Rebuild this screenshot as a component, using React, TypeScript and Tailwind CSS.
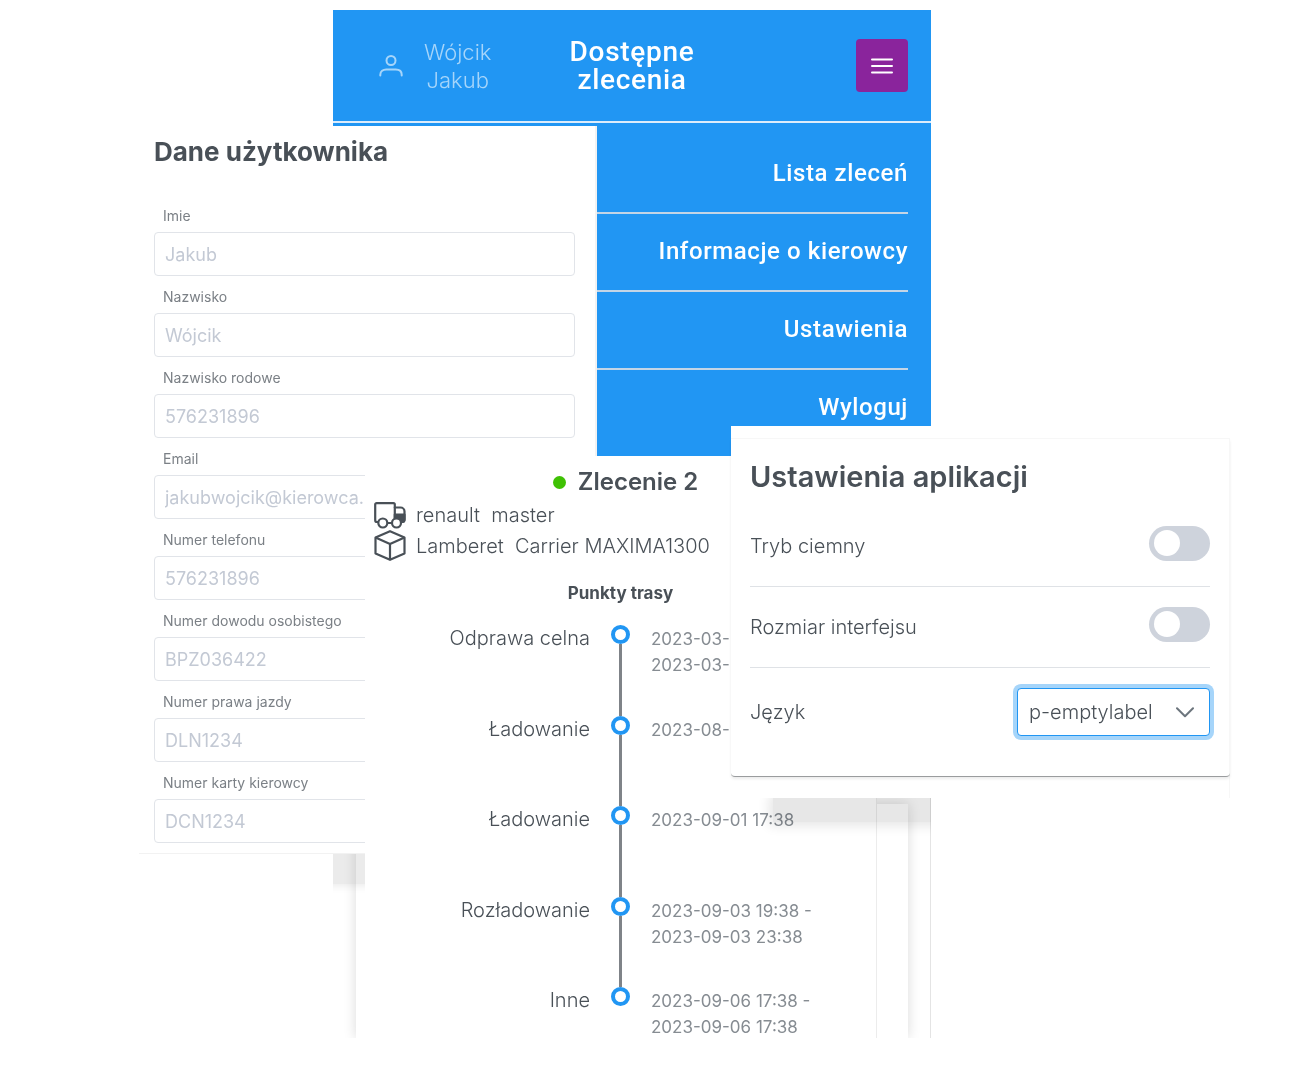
import React from 'react';

const menuItems = ['Lista zleceń', 'Informacje o kierowcy', 'Ustawienia', 'Wyloguj'];

const fields = [
  { id: 'imie', label: 'Imie', value: 'Jakub' },
  { id: 'nazwisko', label: 'Nazwisko', value: 'Wójcik' },
  { id: 'rodowe', label: 'Nazwisko rodowe', value: '576231896' },
  { id: 'email', label: 'Email', value: 'jakubwojcik@kierowca.pl' },
  { id: 'telefon', label: 'Numer telefonu', value: '576231896' },
  { id: 'dowod', label: 'Numer dowodu osobistego', value: 'BPZ036422' },
  { id: 'prawo', label: 'Numer prawa jazdy', value: 'DLN1234' },
  { id: 'karta', label: 'Numer karty kierowcy', value: 'DCN1234' },
];

const stops = [
  { name: 'Odprawa celna', dates: ['2023-03-', '2023-03-'] },
  { name: 'Ładowanie', dates: ['2023-08-'] },
  { name: 'Ładowanie', dates: ['2023-09-01 17:38'] },
  { name: 'Rozładowanie', dates: ['2023-09-03 19:38 -', '2023-09-03 23:38'] },
  { name: 'Inne', dates: ['2023-09-06 17:38 -', '2023-09-06 17:38'] },
];

function UserIcon() {
  return (
    <svg width="24" height="22" viewBox="0 0 24 22" fill="none" stroke="currentColor" strokeWidth="2" strokeLinecap="round" aria-hidden="true">
      <circle cx="12" cy="5.500" r="4.500" />
      <path d="M1.300 20.500v-.7c0-3.600 2.800-5.300 6-5.300h9.400c3.200 0 6 1.700 6 5.300v.7" />
    </svg>
  );
}

function TruckIcon() {
  return (
    <svg width="32" height="27" viewBox="0 0 32 27" fill="none" stroke="currentColor" strokeWidth="2.200" strokeLinejoin="round" strokeLinecap="round" aria-hidden="true">
      <path d="M5 20H3a1.800 1.800 0 0 1-1.800-1.800V2.600a1.400 1.400 0 0 1 1.400-1.400H19.400a1.400 1.400 0 0 1 1.400 1.400V17" />
      <path d="M20.800 5.500h5.700a4 4 0 0 1 4 4v8a2.500 2.500 0 0 1-2.500 2.500" />
      <path d="M20.800 12.500h9.700v5a2.500 2.500 0 0 1-2.500 2.500L23 17h-2.200z" fill="currentColor" />
      <path d="M13 21h5" />
      <circle cx="8.800" cy="21" r="4.500" fill="white" />
      <circle cx="22.500" cy="21" r="4.500" fill="white" />
    </svg>
  );
}

function BoxIcon() {
  return (
    <svg width="32" height="31" viewBox="0 0 32 31" fill="none" stroke="currentColor" strokeWidth="2.200" strokeLinejoin="round" aria-hidden="true">
      <path d="M16 1.200 30.500 7.500V23.500L16 29.800 1.500 23.500V7.500z" />
      <path d="M1.500 7.500 16 14 30.500 7.500M16 14v15.800" />
    </svg>
  );
}

/* The phone panel is the lowest layer and ends level with the order card. */
function PhonePanel() {
  return (
    <section className="col-start-2 col-end-7 row-start-1 mt-[10px] flex h-[1028px] flex-col overflow-hidden bg-white">
      <div className="bg-[#2196f3] text-white">
        <header className="grid h-[113px] grid-cols-3 items-center border-b-2 border-[#dcecfb] px-[23px]">
          <div className="flex items-center gap-[21px] pl-[23px] text-[#a6d5fa]">
            <UserIcon />
            <p className="text-center text-[22px] leading-7 font-light">
              Wójcik
              <br />
              Jakub
            </p>
          </div>
          <h1 className="text-center font-[Roboto,sans-serif] text-[28px] leading-7 font-medium tracking-wide">
            Dostępne zlecenia
          </h1>
          <button type="button" aria-label="Menu" className="flex h-[53px] w-[52px] items-center justify-center justify-self-end rounded bg-[#8a249c]">
            <svg width="24" height="18" viewBox="0 0 24 18" stroke="white" strokeWidth="2" strokeLinecap="round" aria-hidden="true">
              <path d="M2 2.500h20M2 9h20M2 15.500h20" />
            </svg>
          </button>
        </header>
        <nav className="mr-[23px] flex flex-col pt-[13px] pb-[19px]">
          {menuItems.map((item) => (
            <a key={item} href="#" className="h-[78px] border-b-2 border-[#c3d5e6] pt-[21px] text-right font-[Roboto,sans-serif] text-[24px] leading-8 font-medium tracking-wide last:border-0">
              {item}
            </a>
          ))}
        </nav>
      </div>
      <div className="flex flex-1 flex-col border-r border-[#e4e4e4] px-[23px] pt-[337px]">
        <div className="-mr-px flex-1 bg-white shadow-[0_0_12px_rgba(0,0,0,0.15)]" />
      </div>
    </section>
  );
}

function UserPanel() {
  return (
    <section className="col-start-1 col-end-4 row-start-1 mt-[126px] ml-[139px] self-start border-r-2 border-b border-[#f2f2f2] bg-white pr-[20px] pb-[10px] pl-[15px]">
      <h2 className="pt-2 text-[26px] leading-9 font-bold">Dane użytkownika</h2>
      <form className="mt-9 flex flex-col gap-[11px]">
        {fields.map((f) => (
          <div key={f.id} className="flex flex-col gap-[6px]">
            <label htmlFor={f.id} className="pl-[9px] text-[14px] leading-5 text-[#7b8086]">
              {f.label}
            </label>
            <input id={f.id} type="text" placeholder={f.value} className="h-[44px] w-full rounded border border-[#e1e4e9] bg-white px-[10px] text-[18px] placeholder:text-[#c3c9d4]" />
          </div>
        ))}
      </form>
    </section>
  );
}

function OrderPanel() {
  return (
    <section className="col-start-3 col-end-6 row-start-1 mt-[456px] h-[584px] bg-white pl-[9px]">
      <h2 className="flex items-center justify-center gap-3 pt-2 text-[24px] leading-9 font-semibold">
        <span className="size-[13px] rounded-full bg-[#3fc104]" />
        Zlecenie 2
      </h2>
      <ul className="text-[20px] leading-[30px] font-light whitespace-pre">
        <li className="flex items-center gap-[10px]">
          <TruckIcon />
          {'renault  master'}
        </li>
        <li className="flex items-center gap-[10px]">
          <BoxIcon />
          {'Lamberet  Carrier MAXIMA1300'}
        </li>
      </ul>
      <h3 className="pt-4 pr-[10px] text-center text-[17px] leading-8 font-bold">Punkty trasy</h3>
      <ol className="flex h-[453px] flex-col">
        {stops.map((s, i) => (
          <li key={i} className="group grid flex-1 grid-cols-[216px_19px_1fr] gap-x-[21px] pt-[13px]">
            <span className="text-right text-[20px] leading-8 font-light">{s.name}</span>
            <span className="flex flex-col items-center pt-[3px]">
              <span className="size-[19px] shrink-0 rounded-full border-4 border-[#2196f3] bg-white" />
              <span className="-mb-4 w-[3px] flex-1 bg-[#7f8388] group-last:hidden" />
            </span>
            <span className="flex flex-col pt-1 text-[17px] leading-[26px] whitespace-nowrap text-[#868c92]">
              {s.dates.map((d, j) => (
                <time key={j}>{d}</time>
              ))}
            </span>
          </li>
        ))}
      </ol>
    </section>
  );
}

function SwitchRow({ id, label }: { id: string; label: string }) {
  return (
    <div className="flex h-[81px] items-center justify-between border-b border-[#dfe2e6]">
      <label htmlFor={id} className="pb-px">{label}</label>
      <input
        id={id}
        type="checkbox"
        role="switch"
        className="mb-[6px] flex h-[35px] w-[61px] appearance-none items-center rounded-full bg-[#ced3dc] pl-[5px] before:size-[26px] before:rounded-full before:bg-white before:content-['']"
      />
    </div>
  );
}

function SettingsPanel() {
  return (
    <section className="col-start-5 col-end-8 row-start-1 mt-[426px] h-[372px] self-start bg-white pt-3">
      <div className="h-full border-t border-r border-[#f7f7f7]">
        <div className="-mr-px h-[338px] rounded-b border-b border-[#9a9c9e] pr-5 pl-[19px] text-[20px] font-light shadow-[0_2px_3px_rgba(0,0,0,0.08)]">
          <h2 className="pt-5 text-[29px] leading-9 font-semibold">Ustawienia aplikacji</h2>
          <div className="pt-[11px]">
            <SwitchRow id="dark" label="Tryb ciemny" />
            <SwitchRow id="size" label="Rozmiar interfejsu" />
            <div className="flex h-[87px] items-center justify-between">
              <label htmlFor="lang">Język</label>
              <div className="relative">
                <select id="lang" className="h-[48px] w-[193px] appearance-none rounded border border-[#2196f3] bg-white pl-[11px] font-light ring-4 ring-[#a6d5fa]">
                  <option>p-emptylabel</option>
                </select>
                <svg className="pointer-events-none absolute top-[19px] right-4" width="18" height="11" viewBox="0 0 18 11" fill="none" stroke="#6c757d" strokeWidth="2" strokeLinecap="round" strokeLinejoin="round" aria-hidden="true">
                  <path d="M1 1.200l8 8 8-8" />
                </svg>
              </div>
            </div>
          </div>
        </div>
      </div>
    </section>
  );
}

/* Soft shadows that the upper cards cast on the phone panel below them. */
function CastShadows() {
  return (
    <>
      <div className="col-start-2 row-start-1 mt-[854px] h-[44px] overflow-hidden mix-blend-multiply">
        <div className="-mx-4 h-[30px] bg-[#ebebeb] shadow-[0_2px_8px_#ebebeb]" />
      </div>
      <div className="col-start-5 col-end-7 row-start-1 mt-[798px] h-[44px] overflow-hidden pl-[42px] mix-blend-multiply">
        <div className="-mr-4 h-[24px] bg-[#e7e7e7] shadow-[0_0_12px_4px_#e7e7e7]" />
      </div>
      <div className="col-start-7 row-start-1 mt-[797px] h-px w-10 bg-[#b5b5b5]" />
      <div className="col-start-5 row-start-1 mt-[798px] h-[240px] border-r border-[#ececec]" />
    </>
  );
}

export default function App() {
  return (
    <main className="grid min-h-[1080px] grid-cols-[333fr_32fr_232fr_134fr_146fr_54fr_299fr_73fr] bg-white font-[Inter,sans-serif] text-[#495057]">
      <PhonePanel />
      <UserPanel />
      <OrderPanel />
      <CastShadows />
      <SettingsPanel />
    </main>
  );
}
